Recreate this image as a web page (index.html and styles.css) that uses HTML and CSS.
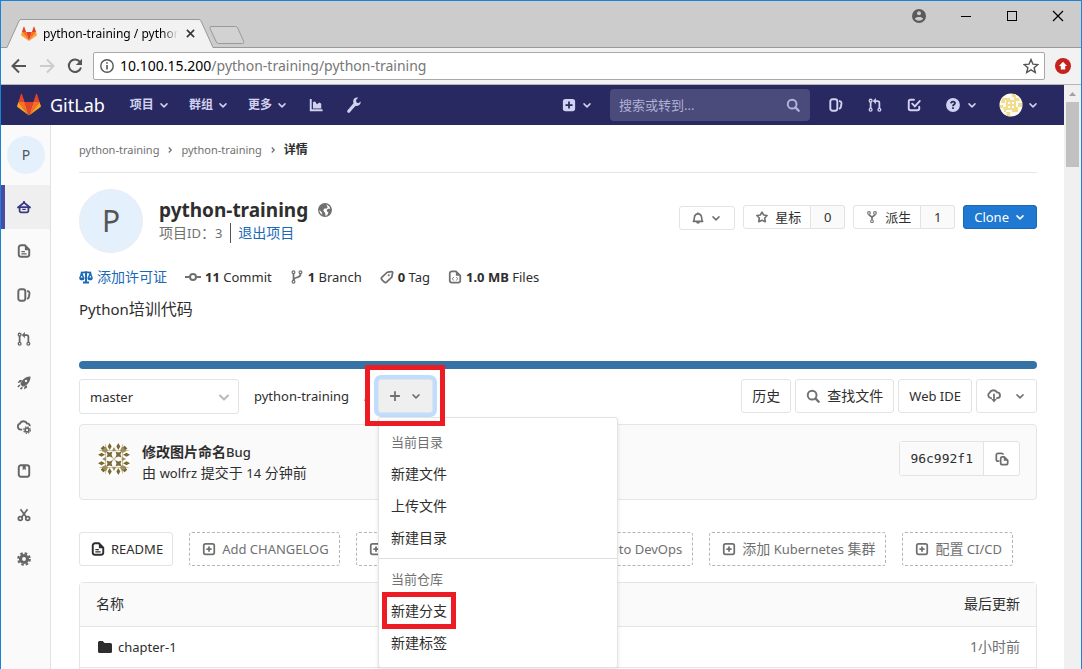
FILE: index.html
```
<!DOCTYPE html>
<html lang="zh-CN">
<head>
<meta charset="utf-8">
<title>python-training / python-training</title>
<link rel="stylesheet" href="styles.css">
</head>
<body>
<svg class="sprite" aria-hidden="true">
  <symbol id="tanuki" viewBox="0 0 24 24">
    <path fill="#e24329" d="M12 22.5 16.4 9H7.600z"/>
    <path fill="#fc6d26" d="M12 22.500 7.600 9H1.400zM12 22.500 16.400 9h6.200z"/>
    <path fill="#fca326" d="M1.400 9 .1 13.100c-.1.400 0 .800.300 1L12 22.500zM22.600 9l1.300 4.100c.1.400 0 .800-.3 1L12 22.500z"/>
    <path fill="#e24329" d="M1.400 9h6.200L4.900 1c-.1-.5-.7-.5-.9 0zM22.600 9h-6.200l2.700-8c.1-.5.7-.5.9 0z"/>
  </symbol>
  <symbol id="chev" viewBox="0 0 16 16"><path d="m4 6.500 4 4 4-4" fill="none" stroke="currentColor" stroke-width="2" stroke-linecap="round" stroke-linejoin="round"/></symbol>
  <symbol id="angle" viewBox="0 0 16 16"><path d="m6 4 4 4-4 4" fill="none" stroke="currentColor" stroke-width="2"/></symbol>
  <symbol id="chart" viewBox="0 0 16 16"><path d="M4.500 12V4.500L7 4l2 3 3-2 2 1.500V12z" fill="currentColor"/><path d="M2 1v13h13.500" fill="none" stroke="currentColor" stroke-width="2.200"/></symbol>
  <symbol id="wrench" viewBox="0 0 16 16"><path d="M14.700 4.500 12.300 6.300 10.300 5.300 10 3l2.200-2.200C9.500-.1 7 2 7.200 4.600c0 .8.100 1.300.3 1.700L1.600 13.300a1.500 1.500 0 0 0 2.300 2L9.600 8.700c2.800.8 5.400-1.200 5.100-4.200z" fill="currentColor"/></symbol>
  <symbol id="plusfill" viewBox="0 0 16 16"><path fill="currentColor" fill-rule="evenodd" d="M4 1h8a3 3 0 0 1 3 3v8a3 3 0 0 1-3 3H4a3 3 0 0 1-3-3V4a3 3 0 0 1 3-3zm3 3v3H4v2h3v3h2V9h3V7H9V4z"/></symbol>
  <symbol id="plusbox" viewBox="0 0 16 16"><rect x="2" y="2" width="12" height="12" rx="2" fill="none" stroke="currentColor" stroke-width="2"/><path d="M8 5v6M5 8h6" stroke="currentColor" stroke-width="2"/></symbol>
  <symbol id="search" viewBox="0 0 16 16"><circle cx="7" cy="7" r="5" fill="none" stroke="currentColor" stroke-width="2.200"/><path d="m11 11 3.500 3.500" stroke="currentColor" stroke-width="2.600" stroke-linecap="round"/></symbol>
  <symbol id="issues" viewBox="0 0 16 16"><rect x="1.500" y="1.500" width="8" height="13" rx="2.500" fill="none" stroke="currentColor" stroke-width="2.200"/><path d="M11.500 3.500c2.500.4 2.900 1 2.700 3l-.6 3.500c-.3 1.500-.8 2-2.100 2.500" fill="none" stroke="currentColor" stroke-width="2.200"/></symbol>
  <symbol id="merge" viewBox="0 0 16 16"><g fill="none" stroke="currentColor"><circle cx="3" cy="3" r="1.600" stroke-width="1.500"/><circle cx="3" cy="13.500" r="1.600" stroke-width="1.500"/><circle cx="13" cy="13.500" r="1.600" stroke-width="1.500"/><path stroke-width="2" d="M3 4.500V12M8 3.500h3c1.400 0 2 .8 2 2V12"/></g><path fill="currentColor" d="M9 0v7L5.500 3.500z"/></symbol>
  <symbol id="todo" viewBox="0 0 16 16"><path d="M8 2H4a2 2 0 0 0-2 2v8a2 2 0 0 0 2 2h8a2 2 0 0 0 2-2v-2M6 6.500 9 9.500l5.500-6" fill="none" stroke="currentColor" stroke-width="2.200" stroke-linecap="round"/></symbol>
  <symbol id="help" viewBox="0 0 16 16"><circle cx="8" cy="8" r="7.900" fill="currentColor"/><path d="M5.700 6.200C5.800 4.700 6.700 4 8 4c1.400 0 2.300.8 2.300 1.900C10.300 7.500 8 7.500 8 9.300M8 10.700v2" fill="none" stroke="#292961" stroke-width="2"/></symbol>
  <symbol id="home" viewBox="0 0 16 16"><path d="M1.200 8.500 8 3l6.800 5.500" fill="none" stroke="currentColor" stroke-width="2.200" stroke-linecap="round" stroke-linejoin="round"/><path d="M3 8h10v4.500a1.500 1.500 0 0 1-1.500 1.500h-7A1.500 1.500 0 0 1 3 12.500z" fill="none" stroke="currentColor" stroke-width="2"/><path d="M6 10h4v1.500H6zM7 1h2v3H7z" fill="currentColor"/></symbol>
  <symbol id="doc" viewBox="0 0 16 16"><path d="M9 1.500H4.500A2.500 2.500 0 0 0 2 4v8a2.500 2.500 0 0 0 2.500 2.500h7A2.500 2.500 0 0 0 14 12V6.500z" fill="none" stroke="currentColor" stroke-width="2.200"/><path d="M9 1v6h5.500zM5 8h4v1.300H5zm0 2.700h6V12H5z" fill="currentColor"/></symbol>
  <symbol id="doccode" viewBox="0 0 16 16"><path d="M9 1.500H4.500A2.500 2.500 0 0 0 2 4v8a2.500 2.500 0 0 0 2.500 2.500h7A2.500 2.500 0 0 0 14 12V6.500z" fill="none" stroke="currentColor" stroke-width="2"/><path d="M9 1v5.500h5z" fill="currentColor"/><path d="m6.500 8-1.500 2 1.500 2m3-4 1.500 2-1.500 2" fill="none" stroke="currentColor"/></symbol>
  <symbol id="rocket" viewBox="0 0 16 16"><path fill="currentColor" fill-rule="evenodd" d="M15.500.5c-4.500 0-8 2-10.500 6L3.800 9.500l2.700 2.700L9.500 11c4-2.500 6-6 6-10.500zm-4.200 6.200a1.300 1.300 0 1 1-2-2 1.300 1.300 0 0 1 2 2zM6 4.500H3L.5 8l3.500-.5zM11.500 10.500V13L8 15.500l.5-3.500z"/><path d="m1 12.500 2.200-2.200M4 15l2-2" stroke="currentColor" stroke-width="1.800"/></symbol>
  <symbol id="cloudgear" viewBox="0 0 16 16"><path d="M6 11H4.500A3.500 3.500 0 0 1 3.300 4.200 4.500 4.500 0 0 1 11.500 4a3 3 0 0 1 3.200 3" fill="none" stroke="currentColor" stroke-width="2.100"/><circle cx="11.500" cy="11.500" r="2.200" fill="none" stroke="currentColor" stroke-width="1.800"/><circle cx="11.500" cy="11.500" r="3.700" fill="none" stroke="currentColor" stroke-width="1.500" stroke-dasharray="1.700 1.200"/></symbol>
  <symbol id="package" viewBox="0 0 16 16"><rect x="2" y="1.500" width="12" height="13" rx="2.500" fill="none" stroke="currentColor" stroke-width="2.200"/><path d="M6.500 2h3.500v5L8.200 5.600 6.500 7z" fill="currentColor"/></symbol>
  <symbol id="scissors" viewBox="0 0 16 16"><g fill="none" stroke="currentColor" stroke-width="2"><circle cx="3.800" cy="12" r="2.200"/><circle cx="12.200" cy="12" r="2.200"/><path d="m4 1.500 6.800 9M12 1.500l-6.800 9"/></g></symbol>
  <symbol id="gear" viewBox="0 0 16 16"><circle cx="8" cy="8" r="4" fill="none" stroke="currentColor" stroke-width="3.600"/><circle cx="8" cy="8" r="6.600" fill="none" stroke="currentColor" stroke-width="2.400" stroke-dasharray="2.900 2.283"/></symbol>
  <symbol id="globe" viewBox="0 0 16 16"><circle cx="8" cy="8" r="7.200" fill="currentColor" stroke="currentColor" stroke-width="1.500"/><path fill="#fff" d="M9.500 1.500 13 4l1 2.500-2.500 0L10 8l.5 2 1.500.5-1.500 3.500-2 .5-.3-3L6.500 9.500 6 8l1.800-2 1.700.5L11 5z"/><path fill="#fff" d="M1.500 8 3 9l1.500 2 .5 2.500C3 12.500 1.700 10.500 1.500 8z"/></symbol>
  <symbol id="scale" viewBox="0 0 16 16"><path d="M8 1.500V14M4.500 14.300h7M2 3.200c3 .2 4-.8 6-.8s3 1 6 .8" fill="none" stroke="currentColor" stroke-width="2.200"/><path fill="currentColor" d="M.2 8.500h6.200a3.100 3.300 0 0 1-6.200 0zM9.600 8.500h6.200a3.100 3.300 0 0 1-6.200 0z"/><path d="m1 9 2-5.300L5.300 9M10.700 9l2.300-5.300L15 9" fill="none" stroke="currentColor" stroke-width="1.600"/></symbol>
  <symbol id="commit" viewBox="0 0 16 16"><circle cx="8" cy="8" r="3" fill="none" stroke="currentColor" stroke-width="2"/><path d="M0 8h4.500M11.500 8H16" stroke="currentColor" stroke-width="2"/></symbol>
  <symbol id="branch" viewBox="0 0 16 16"><g fill="none" stroke="currentColor"><circle cx="4" cy="2.600" r="1.600" stroke-width="1.400"/><circle cx="12" cy="2.600" r="1.600" stroke-width="1.400"/><circle cx="4" cy="13.500" r="1.600" stroke-width="1.400"/><path stroke-width="2" d="M4 4.500v7.200M12 4.500C12 8 9.500 8 7.500 8.600 5.500 9.200 4.500 10 4.300 11.500"/></g></symbol>
  <symbol id="fork" viewBox="0 0 16 16"><g fill="none" stroke="currentColor"><circle cx="4" cy="2.600" r="1.800" stroke-width="1.400"/><circle cx="12" cy="2.600" r="1.800" stroke-width="1.400"/><circle cx="8" cy="13.500" r="1.800" stroke-width="1.400"/><path stroke-width="2.200" d="M4 4.500C4 7 8 6.500 8 9v2.700M12 4.500C12 7 8 6.500 8 9"/></g></symbol>
  <symbol id="tag" viewBox="0 0 16 16"><path d="M9 2.500 13 1.800a1.200 1.200 0 0 1 1.400 1.400L13.500 8l-5.700 5.700a2.200 2.200 0 0 1-3.100 0L2.300 11.300a2.200 2.200 0 0 1 0-3.100L8 2.800z" fill="none" stroke="currentColor" stroke-width="2"/><circle cx="10" cy="6" r="1.200" fill="currentColor"/></symbol>
  <symbol id="bell" viewBox="0 0 16 16"><path d="M1.800 12.500c1.300-1.200 1-2.200 1.300-4.800C3.500 4.200 5.300 2.500 8 2.500s4.500 1.700 4.900 5.200c.3 2.600 0 3.600 1.300 4.800z" fill="none" stroke="currentColor" stroke-width="2.200" stroke-linejoin="round"/><path fill="currentColor" d="M7 .5h2v2H7zM5.500 13h5a2.500 2.500 0 0 1-5 0z"/></symbol>
  <symbol id="star" viewBox="0 0 16 16"><path d="m8 1.500 2.100 3.800 4.700.7-3.200 3.400.7 4.800L8 12.200l-4.300 2 .7-4.800L1.200 6l4.700-.7z" fill="none" stroke="currentColor" stroke-width="2.200" stroke-linejoin="round"/></symbol>
  <symbol id="plus" viewBox="0 0 16 16"><path d="M8 1.500v13M1.500 8h13" stroke="currentColor" stroke-width="2.400"/></symbol>
  <symbol id="download" viewBox="0 0 16 16"><path d="M5.500 10.500H4.600A3.500 3.500 0 0 1 3.200 4 4.700 4.700 0 0 1 11.500 3.800a3.300 3.300 0 0 1 0 6.700h-1" fill="none" stroke="currentColor" stroke-width="2.100"/><path d="M8 5.500V13" stroke="currentColor" stroke-width="2"/><path fill="currentColor" d="M4.800 11.500h6.400L8 15.500z"/></symbol>
  <symbol id="copy" viewBox="0 0 16 16"><path d="M5 10.500H3.500a2 2 0 0 1-2-2V3.500a2 2 0 0 1 2-2h4a2 2 0 0 1 2 1.500" fill="none" stroke="currentColor" stroke-width="2"/><path d="M10.500 5.500H8.500A2 2 0 0 0 6.500 7.500v5a2 2 0 0 0 2 2h4a2 2 0 0 0 2-2v-3z" fill="none" stroke="currentColor" stroke-width="2"/><path fill="currentColor" d="M10 5v5h5z"/></symbol>
  <symbol id="folder" viewBox="0 0 16 16"><path fill="currentColor" d="M1 3.500A1.500 1.500 0 0 1 2.500 2h3.200l1.800 2h6A1.500 1.500 0 0 1 15 5.500v7a1.500 1.500 0 0 1-1.500 1.500h-11A1.500 1.500 0 0 1 1 12.500z"/></symbol>
</svg>

<div class="window">
  <header class="tabstrip">
    <div class="tab">
      <svg class="tab-shape" viewBox="0 0 206 29" preserveAspectRatio="none" aria-hidden="true"><path d="M0 28.500 12 2Q12.600.5 14 .5H192Q193.400.5 194 2L206 28.500V29H0z" fill="#f2f2f2"/><path d="M0 28.500 12 2Q12.600.5 14 .5H192Q193.400.5 194 2L206 28.500" fill="none" stroke="#999"/></svg>
      <svg class="tab-icon"><use href="#tanuki"/></svg>
      <span class="tab-title">python-training / python-training</span>
      <button class="tab-close" aria-label="关闭"><svg viewBox="0 0 10 10"><path d="m1 1 8 8M9 1 1 9" stroke="#333" stroke-width="1.700"/></svg></button>
    </div>
    <button class="newtab" aria-label="新标签页"><svg viewBox="0 0 36 18"><path d="M2 .5h24.500q1.500 0 2.200 1.500l6 13.500q.5 2-1.200 2H9.500q-1.500 0-2.200-1.500L1 2.500Q.5.500 2 .5z" fill="#d2d2d2" stroke="#999"/></svg></button>
    <div class="wincontrols">
      <button aria-label="用户"><svg viewBox="0 0 14 14"><circle cx="7" cy="7" r="7" fill="#5a5a5a"/><circle cx="7" cy="4.300" r="2" fill="#ccc"/><path d="M2.800 9.800c1-2.400 7.400-2.400 8.400 0-1.800 2.500-6.600 2.500-8.400 0z" fill="#ccc"/></svg></button>
      <button aria-label="最小化"><svg viewBox="0 0 12 12"><path d="M1 6.500h10" stroke="#000"/></svg></button>
      <button aria-label="最大化"><svg viewBox="0 0 12 12"><rect x="1.500" y="1.500" width="9" height="9" fill="none" stroke="#000"/></svg></button>
      <button aria-label="关闭窗口"><svg viewBox="0 0 12 12"><path d="m1 1 10 10M11 1 1 11" stroke="#000" stroke-width="1.200"/></svg></button>
    </div>
  </header>
  <div class="toolbar">
    <button aria-label="后退"><svg viewBox="0 0 16 16"><path d="M15 8H2M8 1.500 1.500 8 8 14.500" fill="none" stroke="#555" stroke-width="2"/></svg></button>
    <button aria-label="前进"><svg viewBox="0 0 16 16"><path d="M1 8h13M8 1.500 14.500 8 8 14.500" fill="none" stroke="#ccc" stroke-width="2"/></svg></button>
    <button aria-label="刷新"><svg viewBox="0 0 16 16"><path d="M13.200 4.300A6.200 6.200 0 1 0 14 9.500" fill="none" stroke="#555" stroke-width="2"/><path d="M15 .8v6.200H8.800z" fill="#555"/></svg></button>
    <div class="address">
      <svg class="info" viewBox="0 0 14 14"><circle cx="7" cy="7" r="6.200" fill="none" stroke="#555" stroke-width="1.400"/><path d="M7 6v4.500M7 3.200v1.600" stroke="#555" stroke-width="1.600"/></svg>
      <div class="url" role="textbox" aria-label="地址">10.100.15.200<span>/python-training/python-training</span></div>
      <button aria-label="收藏"><svg viewBox="0 0 16 16"><path d="m8 1.500 1.900 4.600 5 .4-3.800 3.200 1.200 4.800L8 11.900l-4.300 2.600 1.200-4.800L1.100 6.500l5-.4z" fill="none" stroke="#555" stroke-width="1.400"/></svg></button>
    </div>
    <button class="ext" aria-label="更新"><svg viewBox="0 0 16 16"><circle cx="8" cy="8" r="8" fill="#c5221f"/><path d="M8 3.700 12 8h-1.800v3.500H5.800V8H4z" fill="#fff"/></svg></button>
  </div>

  <div class="viewport">
    <div class="page">
      <nav class="navbar">
        <a class="brand" href="#"><svg><use href="#tanuki"/></svg><span>GitLab</span></a>
        <button class="navlink">项目<svg class="chev"><use href="#chev"/></svg></button>
        <button class="navlink">群组<svg class="chev"><use href="#chev"/></svg></button>
        <button class="navlink">更多<svg class="chev"><use href="#chev"/></svg></button>
        <button class="navicon" aria-label="统计"><svg><use href="#chart"/></svg></button>
        <button class="navicon wrench" aria-label="管理"><svg><use href="#wrench"/></svg></button>
        <button class="navpair create" aria-label="新建"><svg><use href="#plusfill"/></svg><svg class="chev"><use href="#chev"/></svg></button>
        <label class="navsearch"><input type="text" placeholder="搜索或转到..." aria-label="搜索或转到"><svg><use href="#search"/></svg></label>
        <div class="navright">
          <button aria-label="议题"><svg><use href="#issues"/></svg></button>
          <button aria-label="合并请求"><svg><use href="#merge"/></svg></button>
          <button aria-label="待办事项"><svg><use href="#todo"/></svg></button>
        </div>
        <button class="navpair" aria-label="帮助"><svg><use href="#help"/></svg><svg class="chev"><use href="#chev"/></svg></button>
        <button class="navpair user" aria-label="用户菜单">
          <svg class="face" viewBox="0 0 24 24"><circle cx="12" cy="12" r="11.500" fill="#fffdf2"/><g fill="#f1dc8e"><path d="M7 7h10v10H7zM3 5h8v2H6v3H2zM13 1h4v6h-2V4h-2zM17 5h3l1 3h-4zM19 10h4v4h-4zM17 14h2v5h-6v-2h4zM7 19h4v4H8zM4 14h3v5H5zM1 12h3v3H1z"/></g><g fill="#fff"><path d="M9 9h2v2H9zm4 0h2v2h-2zm-4 4h2v2H9zm4 0h2v2h-2z"/></g></svg>
          <svg class="chev"><use href="#chev"/></svg></button>
      </nav>

      <div class="body">
        <aside class="sidebar">
          <a class="side-avatar" href="#">P</a>
          <a class="side active" href="#" aria-label="项目"><svg><use href="#home"/></svg></a>
          <a class="side" href="#" aria-label="仓库"><svg><use href="#doc"/></svg></a>
          <a class="side" href="#" aria-label="议题"><svg><use href="#issues"/></svg></a>
          <a class="side" href="#" aria-label="合并请求"><svg><use href="#merge"/></svg></a>
          <a class="side" href="#" aria-label="CI/CD"><svg><use href="#rocket"/></svg></a>
          <a class="side" href="#" aria-label="运维"><svg><use href="#cloudgear"/></svg></a>
          <a class="side" href="#" aria-label="Wiki"><svg><use href="#package"/></svg></a>
          <a class="side" href="#" aria-label="代码片段"><svg><use href="#scissors"/></svg></a>
          <a class="side" href="#" aria-label="设置"><svg><use href="#gear"/></svg></a>
        </aside>

        <main class="content">
          <nav class="crumbs"><a href="#">python-training</a><svg><use href="#angle"/></svg><a href="#">python-training</a><svg><use href="#angle"/></svg><strong>详情</strong></nav>

          <section class="project">
            <div class="avatar">P</div>
            <div class="titles">
              <h1>python-training<svg><use href="#globe"/></svg></h1>
              <p><span class="pid">项目<span class="lat">ID</span><span class="colon">：</span><span class="lat">3</span></span><a href="#">退出项目</a></p>
            </div>
            <div class="actions">
              <button class="btn small bell" aria-label="通知"><svg><use href="#bell"/></svg><svg class="chev"><use href="#chev"/></svg></button>
              <div class="group"><button class="btn small"><svg><use href="#star"/></svg>星标</button><a class="count" href="#">0</a></div>
              <div class="group"><button class="btn small"><svg><use href="#fork"/></svg>派生</button><a class="count" href="#">1</a></div>
              <button class="btn small clone">Clone<svg class="chev"><use href="#chev"/></svg></button>
            </div>
          </section>

          <div class="stats">
            <a class="license" href="#"><svg><use href="#scale"/></svg>添加许可证</a>
            <a href="#"><svg class="wide"><use href="#commit"/></svg><span><b>11</b> Commit</span></a>
            <a href="#"><svg><use href="#branch"/></svg><span><b>1</b> Branch</span></a>
            <a href="#"><svg><use href="#tag"/></svg><span><b>0</b> Tag</span></a>
            <a href="#"><svg><use href="#doccode"/></svg><span><b>1.0 MB</b> Files</span></a>
          </div>
          <p class="desc">Python<span>培训代码</span></p>
          <div class="langbar"></div>

          <div class="treebar">
            <div class="ref"><select aria-label="分支"><option>master</option></select><svg><use href="#chev"/></svg></div>
            <a class="path" href="#">python-training</a>
            <span class="slash">/</span>
            <div class="adder">
              <button class="btn add" aria-label="添加" aria-expanded="true"><svg><use href="#plus"/></svg><svg class="chev"><use href="#chev"/></svg></button>
              <ul class="menu">
                <li class="head">当前目录</li>
                <li><a href="#">新建文件</a></li>
                <li><a href="#">上传文件</a></li>
                <li><a href="#">新建目录</a></li>
                <li class="head divided">当前仓库</li>
                <li class="marked"><a href="#">新建分支</a></li>
                <li><a href="#">新建标签</a></li>
              </ul>
            </div>
            <div class="treeactions">
              <button class="btn">历史</button>
              <button class="btn find"><svg><use href="#search"/></svg>查找文件</button>
              <button class="btn latin">Web IDE</button>
              <button class="btn dl" aria-label="下载"><svg><use href="#download"/></svg><svg class="chev"><use href="#chev"/></svg></button>
            </div>
          </div>

          <section class="commit">
            <svg class="identicon" viewBox="0 0 34 34">
              <defs>
                <clipPath id="round"><circle cx="17" cy="17" r="17"/></clipPath>
                <g id="quarter">
                  <path d="M0 8.500h17M8.500 0v17M0 0l17 17" stroke="#cfc6a6" stroke-width="1.200" fill="none"/>
                  <path d="M9.500 9.500l3 1 3-1-1 3 1 3-3-1-3 1 1-3zM12.700 1l2 3.500-2 3.500-2-3.500zM1 12.700l3.500-2 3.500 2-3.500 2zM6 3l2.500 3L6 8.500 3 6z" fill="#7c6a34"/>
                  <path d="M9 4.500 11 8.500 8.500 11 4.500 9zM17 5l-2 3.500 2 1zM5 17l3.500-2 1 2z" fill="#9d8f62"/>
                </g>
              </defs>
              <g clip-path="url(#round)"><rect width="34" height="34" fill="#fff"/>
                <use href="#quarter"/><use href="#quarter" transform="matrix(-1 0 0 1 34 0)"/><use href="#quarter" transform="matrix(1 0 0 -1 0 34)"/><use href="#quarter" transform="matrix(-1 0 0 -1 34 34)"/></g>
            </svg>
            <div class="commit-text">
              <a href="#" class="commit-title"><b>修改图片命名</b><span class="lat">Bug</span></a>
              <p>由 <span class="lat">wolfrz</span> 提交于 <span class="lat">14</span> 分钟前</p>
            </div>
            <div class="sha"><code>96c992f1</code><button aria-label="复制"><svg><use href="#copy"/></svg></button></div>
          </section>

          <div class="filebtns">
            <a class="btn latin readme" href="#"><svg><use href="#doc"/></svg>README</a>
            <a class="btn dashed latin" href="#"><svg><use href="#plusbox"/></svg>Add CHANGELOG</a>
            <a class="btn dashed latin" href="#"><svg><use href="#plusbox"/></svg>Add CONTRIBUTING</a>
            <a class="btn dashed latin" href="#"><svg><use href="#plusbox"/></svg>启用 Auto DevOps</a>
            <a class="btn dashed latin" href="#"><svg><use href="#plusbox"/></svg><span><span class="zh">添加</span> Kubernetes <span class="zh">集群</span></span></a>
            <a class="btn dashed latin" href="#"><svg><use href="#plusbox"/></svg><span><span class="zh">配置</span> CI/CD</span></a>
          </div>

          <div class="files">
            <table>
              <thead><tr><th>名称</th><th class="when">最后更新</th></tr></thead>
              <tbody><tr><td><a class="file" href="#"><svg><use href="#folder"/></svg>chapter-1</a></td><td class="when">1小时前</td></tr>
              <tr><td></td><td></td></tr></tbody>
            </table>
          </div>
        </main>
      </div>
    </div>
    <div class="scrollbar"><svg viewBox="0 0 17 17"><path d="m5 11 3.500-4 3.500 4z" fill="#a3a3a3"/></svg><div class="thumb"></div></div>
  </div>
</div>
</body>
</html>
```
FILE: styles.css
```
*, *::before, *::after { box-sizing: border-box; }
body {
  margin: 0;
  color: #2e2e2e;
  font: 14px/20px "Noto Sans", "Noto Sans CJK SC", sans-serif;
}
button, input, select { font: inherit; color: inherit; }
button { margin: 0; padding: 0; border: 0; background: none; }
a { color: inherit; text-decoration: none; }
p, h1, ul { margin: 0; padding: 0; }
svg { display: block; flex: none; width: 16px; height: 16px; }
.sprite { position: absolute; width: 0; height: 0; }
svg.chev { width: 12px; height: 12px; }
.lat, .latin { font-size: 13px; }
.zh { font-size: 14px; }

.window {
  display: flex;
  flex-direction: column;
  height: 100vh;
  overflow: hidden;
  border: solid #1883d7;
  border-width: 1px 1px 0;
}

.tabstrip {
  display: flex;
  align-items: flex-end;
  flex: none;
  height: 47px;
  padding-left: 6px;
  border-bottom: 1px solid #999;
  background: #ccc;
}
.tab {
  position: relative;
  display: flex;
  align-items: center;
  width: 206px;
  height: 29px;
  margin-bottom: -1px;
  padding: 0 18px 0 14px;
}
.tab-shape { position: absolute; inset: 0; width: 100%; height: 100%; }
.tab-icon { position: relative; }
.tab-title {
  position: relative;
  flex: 1;
  margin: 0 8px 0 6px;
  overflow: hidden;
  white-space: nowrap;
  color: #000;
  font-size: 12px;
  -webkit-mask-image: linear-gradient(to right, #000 88%, transparent);
  mask-image: linear-gradient(to right, #000 88%, transparent);
}
.tab-close { position: relative; }
.tab-close svg { width: 9px; height: 9px; }
.newtab { align-self: flex-end; padding-bottom: 3px; margin-left: -4px; }
.newtab svg { width: 36px; height: 18px; }
.wincontrols {
  display: flex;
  align-self: flex-start;
  gap: 34px;
  margin-left: auto;
  padding: 8px 17px 0 0;
}
.wincontrols svg { width: 12px; height: 12px; }
.wincontrols button:first-child svg { width: 14px; height: 14px; }

.toolbar {
  display: flex;
  align-items: center;
  flex: none;
  gap: 12px;
  height: 37px;
  padding: 0 10px;
  border-bottom: 1px solid #b6b6b6;
  background: #f2f2f2;
}
.address {
  display: flex;
  align-items: center;
  flex: 1;
  height: 28px;
  margin: 0 -2px;
  padding: 0 5px 0 6px;
  border: 1px solid #a8a8a8;
  border-radius: 2px;
  background: #fff;
}
.info { width: 14px; height: 14px; }
.url { flex: 1; margin-left: 6px; color: #000; font-size: 14px; }
.url span { color: #777; }

.viewport { display: flex; flex: 1; min-height: 0; }
.page { flex: 1; min-width: 0; background: #fff; }
.scrollbar { width: 17px; background: #f0f0f0; }
.scrollbar svg { width: 17px; height: 17px; }
.thumb { height: 65px; margin: 0 2px; background: #c1c1c1; }

.navbar {
  display: flex;
  align-items: center;
  height: 40px;
  padding: 0 25px 0 16px;
  background: #292961;
  color: #d1d1f0;
}
.navbar button { display: flex; align-items: center; }
.brand { display: flex; align-items: center; gap: 9px; margin-right: 25px; color: #fff; font-size: 18px; }
.brand svg { width: 24px; height: 24px; }
.navlink { gap: 4px; margin-right: 19px; font-size: 12px; font-weight: 700; }
.navicon svg { width: 14px; height: 14px; }
.navicon { margin-left: 2px; }
.navbar .wrench { margin-left: 23px; }
.wrench svg { width: 16px; height: 16px; }
.navpair { gap: 6px; }
.navpair svg:first-child { width: 14px; height: 14px; }
.create { gap: 5px; margin: 0 17px 0 auto; }
.navsearch {
  display: flex;
  align-items: center;
  width: 200px;
  height: 32px;
  padding: 0 10px 0 9px;
  border-radius: 4px;
  background: #4a4a7b;
  color: #b5b5d8;
}
.navsearch input { flex: 1; min-width: 0; padding: 0; border: 0; outline: 0; background: none; font-size: 13px; }
.navsearch input::placeholder { color: #b0b0d4; opacity: 1; }
.navsearch svg { width: 14px; height: 14px; }
.navright { display: flex; gap: 25px; margin: 0 25px 0 19px; }
.navright svg { width: 14px; height: 14px; }
.navbar .user { margin-left: 21px; gap: 4px; }
.navbar .navpair .face { width: 24px; height: 24px; }

.body { display: flex; }
.sidebar {
  flex: none;
  width: 50px;
  height: 560px;
  padding-top: 11px;
  border-right: 1px solid #e1e1e1;
  background: #fafafa;
  color: #666;
}
.side-avatar {
  display: grid;
  place-items: center;
  width: 38px;
  height: 38px;
  margin: 0 0 11px 6px;
  border-radius: 50%;
  background: #e4f1fd;
  color: #555;
  font-size: 14px;
}
.side { display: grid; align-items: center; height: 44px; padding-left: 16px; }
.side svg { width: 14px; height: 14px; }
.side.active { padding-left: 12px; border-left: 4px solid #4b4ba3; background: #efefef; color: #393982; }

.content { flex: 1; min-width: 0; padding: 0 27px 0 28px; }
.crumbs {
  display: flex;
  align-items: center;
  gap: 6px;
  height: 48px;
  padding-top: 2px;
  border-bottom: 1px solid #e5e5e5;
  color: #707070;
  font-size: 11px;
}
.crumbs svg { width: 10px; height: 10px; }
.crumbs strong { color: #2e2e2e; font-size: 12px; }

.project { display: flex; padding-top: 16px; }
.avatar {
  display: grid;
  place-items: center;
  width: 64px;
  height: 64px;
  border: 1px solid #ececf0;
  border-radius: 50%;
  background: #e4f1fd;
  color: #555;
  font-size: 30px;
}
.titles { flex: 1; margin-left: 16px; padding-top: 8px; }
h1 { display: flex; align-items: center; gap: 10px; font-size: 19px; line-height: 26px; }
h1 svg { width: 14px; height: 14px; color: #707070; }
.titles p { display: flex; align-items: center; color: #707070; line-height: 20px; }
.colon { font-family: "Noto Sans CJK TC", sans-serif; line-height: 1; }
.pid { padding-right: 8px; border-right: 1px solid #555; }
.titles p a { margin-left: 7px; color: #1b69b6; }
.actions { display: flex; align-items: flex-start; gap: 8px; padding-top: 16px; }
.btn {
  display: flex;
  align-items: center;
  justify-content: center;
  height: 34px;
  padding: 0 10px;
  border: 1px solid #e3e3e3;
  border-radius: 3px;
  background: #fff;
  white-space: nowrap;
}
.btn svg { color: #707070; }
.small { height: 24px; }
.small svg { width: 12px; height: 12px; }
.bell { gap: 6px; margin-top: 1px; padding: 0 12px; }
.group { display: flex; }
.group .btn { gap: 7px; padding: 0 9px 0 12px; border-radius: 3px 0 0 3px; font-size: 13px; }
.count {
  width: 34px;
  height: 24px;
  border: 1px solid #e3e3e3;
  border-left: 0;
  border-radius: 0 3px 3px 0;
  background: #fafafa;
  font-size: 13px;
  line-height: 22px;
  text-align: center;
}
.clone { gap: 5px; border-color: #1b69b6; background: #1f78d1; color: #fff; font-size: 13px; }
.clone svg { color: #fff; }

.stats { display: flex; gap: 18px; margin-top: 14px; color: #2e2e2e; font-size: 13px; }
.stats a { display: flex; align-items: center; gap: 4px; }
.stats svg { width: 14px; height: 14px; color: #707070; }
.stats .wide { width: 16px; height: 16px; }
.stats .license { color: #1b69b6; font-size: 14px; }
.stats .license svg { color: #1b69b6; }
.desc { margin-top: 12px; font-size: 15px; }
.desc span { font-size: 16px; }
.langbar { height: 8px; margin-top: 42px; border-radius: 4px; background: #3572a5; }

.treebar { display: flex; align-items: flex-start; margin-top: 10px; }
.ref { position: relative; width: 160px; }
.ref select {
  width: 100%;
  height: 35px;
  padding: 0 10px;
  border: 1px solid #e3e3e3;
  border-radius: 3px;
  background: #fff;
  font-size: 13px;
  appearance: none;
}
.ref svg { position: absolute; right: 7px; top: 10px; color: #bababa; }
.ref select, .ref { display: block; }
.ref svg { width: 16px; height: 16px; }
.path, .slash { line-height: 34px; }
.path { margin-left: 15px; font-size: 13px; }
.slash { width: 14px; margin-left: 15px; color: #707070; }
.adder { position: relative; }
.adder::after {
  content: "";
  position: absolute;
  inset: -14px -12px -13px -13px;
  z-index: 3;
  border: 5px solid #ed1c24;
  pointer-events: none;
}
.add { gap: 9px; width: 55px; background: #efefef; box-shadow: 0 0 0 4px #bfdeff; }
.add svg:first-child { width: 12px; height: 12px; }
.menu {
  position: absolute;
  top: 38px;
  left: 0;
  z-index: 2;
  width: 240px;
  padding: 8px 0;
  border: 1px solid #e3e3e3;
  border-radius: 3px;
  background: #fff;
  box-shadow: 0 2px 4px rgba(0, 0, 0, .1);
  list-style: none;
}
.menu li { position: relative; padding: 6px 12px; }
.menu .head { color: #707070; font-size: 13px; }
.menu .divided { margin-top: 4px; padding-top: 10px; border-top: 1px solid #dfdfdf; }
.marked::after {
  content: "";
  position: absolute;
  inset: -3px auto -2px 3px;
  width: 74px;
  border: 5px solid #ed1c24;
}
.treeactions { display: flex; gap: 4px; margin-left: auto; }
.find { gap: 7px; }
.find svg, .dl svg:first-child { width: 14px; height: 14px; }
.dl { gap: 13px; }

.commit {
  display: flex;
  align-items: flex-start;
  height: 76px;
  margin-top: 10px;
  padding: 16px;
  border: 1px solid #e5e5e5;
  border-radius: 4px;
  background: #fafafa;
}
.identicon { width: 34px; height: 34px; margin: 1px 0 0 1px; }
.commit-text { flex: 1; margin-left: 11px; }
.commit-text a { display: block; line-height: 22px; }
.commit-title .lat { font-weight: 500; }
.sha { display: flex; height: 35px; border: 1px solid #e3e3e3; border-radius: 3px; background: #fff; }
.sha code {
  padding: 0 10px;
  border-right: 1px solid #e3e3e3;
  background: #fafafa;
  font: 13px/33px "DejaVu Sans Mono", monospace;
}
.sha button { display: grid; place-items: center; width: 35px; color: #707070; }
.sha svg { width: 14px; height: 14px; }

.filebtns { display: flex; gap: 16px; margin-top: 32px; }
.filebtns .btn { gap: 6px; padding: 0 10px 0 12px; }
.filebtns svg { width: 14px; height: 14px; }
.filebtns .readme { padding: 0 9px 0 11px; }
.filebtns .readme svg { color: #2e2e2e; }
.filebtns .dashed { border: 1px dashed #b5b5b5; color: #707070; }

.files { height: 200px; margin-top: 16px; border: 1px solid #e5e5e5; border-radius: 4px 4px 0 0; }
table { width: 100%; border-collapse: collapse; }
th { height: 43px; padding: 0 16px; background: #fafafa; font-weight: 400; text-align: left; }
td { height: 41px; padding: 0 16px; border-top: 1px solid #e5e5e5; }
th.when, td.when { text-align: right; }
td.when { color: #707070; }
.file { display: flex; align-items: center; gap: 5px; font-size: 13px; }
.file svg { margin-left: 1px; }
```
